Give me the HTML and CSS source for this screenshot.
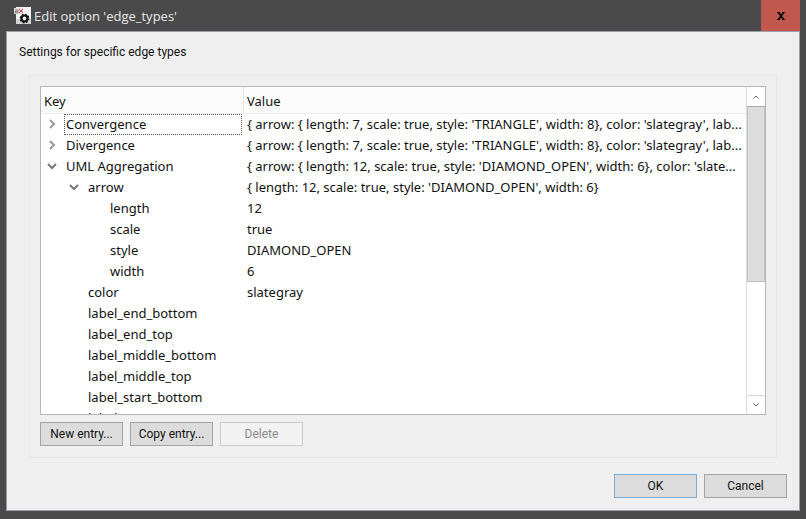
FILE: index.html
```html
<!DOCTYPE html>
<html lang="en">
    <head>
        <title>Edit option 'edge_types'</title>
        <meta charset="UTF-8">
        <meta name="viewport" content="width=device-width,initial-scale=1">
        <link rel="stylesheet" href="styles.css">
    </head>
    <body>
        <div class="window">
            <header class="titlebar">
                <svg class="app-icon" width="18" height="18" viewBox="0 0 18 18">
                    <rect x="2" y="0" width="15" height="17" fill="#f4f4f4"/>
                    <rect x="2" y="12" width="15" height="5" fill="#d4d4d4"/>
                    <rect x="0" y="1" width="9" height="6" fill="#e6dede"/>
                    <path d="M1 3h3v3h-3v-1.500h3" fill="none" stroke="#888"/>
                    <path d="M5 2l4 4M9 2l-4 4" stroke="#e0364a"/>
                    <circle cx="10.500" cy="11.500" r="3" fill="none" stroke="#111" stroke-width="2.200"/>
                    <circle cx="10.500" cy="11.500" r="4.300" fill="none" stroke="#111" stroke-width="1.200" stroke-dasharray="1.700 1.677"/>
                </svg>
                <h1>Edit option 'edge_types'</h1>
                <button class="close" aria-label="Close">
                    <svg width="8" height="8" viewBox="0 0 8 8"><path d="M0 .5h3M5 .5h3M0 7.500h3M5 7.500h3" stroke="#000"/><path d="M1.500 .5l5 7M6.500 .5l-5 7" stroke="#000" stroke-width="1.700"/></svg>
                </button>
            </header>

            <main class="content">
                <p class="description">Settings for specific edge types</p>

                <section class="group">
                    <div class="tree">
                        <div class="tree-view">
                            <table>
                                <colgroup><col class="key-col"><col></colgroup>
                                <thead>
                                    <tr><th>Key</th><th>Value</th></tr>
                                </thead>
                                <tbody>
                                    <tr>
                                        <td><div class="key"><svg class="arrow" viewBox="0 0 10 10"><path d="M3 1l4 4-4 4"/></svg><span class="name focused">Convergence</span></div></td>
                                        <td>{ arrow: { length: 7, scale: true, style: 'TRIANGLE', width: 8}, color: 'slategray', lab...</td>
                                    </tr>
                                    <tr>
                                        <td><div class="key"><svg class="arrow" viewBox="0 0 10 10"><path d="M3 1l4 4-4 4"/></svg><span class="name">Divergence</span></div></td>
                                        <td>{ arrow: { length: 7, scale: true, style: 'TRIANGLE', width: 8}, color: 'slategray', lab...</td>
                                    </tr>
                                    <tr>
                                        <td><div class="key"><svg class="arrow open" viewBox="0 0 10 10"><path d="M1 3l4 4 4-4"/></svg><span class="name">UML Aggregation</span></div></td>
                                        <td>{ arrow: { length: 12, scale: true, style: 'DIAMOND_OPEN', width: 6}, color: 'slate...</td>
                                    </tr>
                                    <tr>
                                        <td><div class="key level-1"><svg class="arrow open" viewBox="0 0 10 10"><path d="M1 3l4 4 4-4"/></svg><span class="name">arrow</span></div></td>
                                        <td>{ length: 12, scale: true, style: 'DIAMOND_OPEN', width: 6}</td>
                                    </tr>
                                    <tr><td><div class="key leaf level-2"><span class="name">length</span></div></td><td>12</td></tr>
                                    <tr><td><div class="key leaf level-2"><span class="name">scale</span></div></td><td>true</td></tr>
                                    <tr><td><div class="key leaf level-2"><span class="name">style</span></div></td><td>DIAMOND_OPEN</td></tr>
                                    <tr><td><div class="key leaf level-2"><span class="name">width</span></div></td><td>6</td></tr>
                                    <tr><td><div class="key leaf level-1"><span class="name">color</span></div></td><td>slategray</td></tr>
                                    <tr><td><div class="key leaf level-1"><span class="name">label_end_bottom</span></div></td><td></td></tr>
                                    <tr><td><div class="key leaf level-1"><span class="name">label_end_top</span></div></td><td></td></tr>
                                    <tr><td><div class="key leaf level-1"><span class="name">label_middle_bottom</span></div></td><td></td></tr>
                                    <tr><td><div class="key leaf level-1"><span class="name">label_middle_top</span></div></td><td></td></tr>
                                    <tr><td><div class="key leaf level-1"><span class="name">label_start_bottom</span></div></td><td></td></tr>
                                    <tr><td><div class="key leaf level-1"><span class="name">label_start_top</span></div></td><td></td></tr>
                                </tbody>
                            </table>
                        </div>
                        <div class="scrollbar">
                            <button class="scroll-button" aria-label="Scroll up"><svg width="6" height="4" viewBox="0 0 6 4"><path d="M.5 3.500l2.500-2.500 2.500 2.500"/></svg></button>
                            <div class="track"><div class="thumb"></div></div>
                            <button class="scroll-button down" aria-label="Scroll down"><svg width="6" height="4" viewBox="0 0 6 4"><path d="M.5 .5l2.500 2.500 2.500-2.500"/></svg></button>
                        </div>
                    </div>
                    <div class="buttons">
                        <button class="btn">New entry...</button>
                        <button class="btn">Copy entry...</button>
                        <button class="btn" disabled>Delete</button>
                    </div>
                </section>

                <footer class="buttons dialog-buttons">
                    <button class="btn default">OK</button>
                    <button class="btn">Cancel</button>
                </footer>
            </main>
        </div>
    </body>
</html>
```
FILE: styles.css
```css
* {
    box-sizing: border-box;
}

body {
    margin: 0;
    background: #4a4a4a;
    color: #111;
    font-family: Roboto, "Open Sans", sans-serif;
    font-size: 12px;
}

button {
    font: inherit;
    color: inherit;
    padding: 0;
}

.window {
    height: 100vh;
    padding: 0 6px 8px;
    display: flex;
    flex-direction: column;
}

.titlebar {
    height: 31px;
    padding-left: 8px;
    display: flex;
    align-items: center;
    flex: none;
    color: #e8e8e8;
}

.titlebar h1 {
    flex: 1;
    margin: 0 0 0 2px;
    font-family: "Open Sans", "Noto Sans", sans-serif;
    font-size: 13px;
    font-weight: normal;
}

.close {
    width: 39px;
    height: 31px;
    display: flex;
    align-items: center;
    justify-content: center;
    border: 0;
    background: #c1584e;
}

.content {
    flex: 1;
    min-height: 0;
    padding: 11px 12px 12px;
    display: flex;
    flex-direction: column;
    background: #efefef;
    border: 1px solid #9aa0a6;
}

.description {
    margin: 0 0 14px;
    line-height: 18px;
}

.group {
    flex: 1;
    min-height: 0;
    margin: 0 10px 16px;
    padding: 10px 10px 11px;
    display: flex;
    flex-direction: column;
    border: 1px solid #e4e6e8;
}

.tree {
    flex: 1;
    min-height: 0;
    display: flex;
    background: #fff;
    border: 1px solid #b4b6ba;
}

.tree-view {
    flex: 1;
    min-width: 0;
    overflow: hidden;
}

table {
    width: 100%;
    table-layout: fixed;
    border-collapse: separate;
    border-spacing: 0;
    font-family: "Noto Sans", "Open Sans", sans-serif;
    font-size: 13px;
    line-height: 21px;
    white-space: nowrap;
}

.key-col {
    width: 203px;
}

th {
    height: 27px;
    padding: 2px 3px 0;
    text-align: left;
    font-weight: normal;
    background: #fcfcfc;
    border-bottom: 1px solid #ececec;
}

th:first-child {
    border-right: 1px solid #e4e4e4;
}

td {
    height: 21px;
    padding: 0 3px;
    overflow: hidden;
}

td:first-child {
    padding: 0 2px 0 6px;
}

.key {
    display: flex;
    align-items: center;
}

.key.level-1 {
    padding-left: 22px;
}

.key.level-2 {
    padding-left: 44px;
}

.arrow {
    width: 10px;
    height: 10px;
    margin: 0 7px 2px 0;
    fill: none;
    stroke: #999;
    stroke-width: 2px;
}

.arrow.open {
    stroke: #777;
}

.leaf::before {
    content: "";
    width: 17px;
}

.name {
    flex: 1;
    height: 21px;
    padding-left: 2px;
}

.name.focused {
    outline: 1px dotted #555;
    outline-offset: -1px;
}

.scrollbar {
    width: 19px;
    display: flex;
    flex-direction: column;
    border-left: 1px solid #dcdcdc;
}

.scroll-button {
    height: 19px;
    display: flex;
    align-items: center;
    justify-content: center;
    border: 0;
    background: #fff;
}

.scroll-button.down {
    border-top: 1px solid #dcdcdc;
}

.scroll-button svg {
    fill: none;
    stroke: #666;
}

.track {
    flex: 1;
}

.thumb {
    height: 61%;
    background: #dcdcdc;
    border: 1px solid #c4c4c4;
    border-top-color: #a8a8a8;
}

.buttons {
    display: flex;
    gap: 7px;
    margin-top: 7px;
}

.dialog-buttons {
    justify-content: flex-end;
    margin-top: 0;
}

.btn {
    width: 83px;
    height: 24px;
    background: #dcdcdc;
    border: 1px solid #a4a4a4;
}

.btn.default {
    border-color: #7eabd0;
}

.btn:disabled {
    color: #8a8a8a;
    background: #f2f2f2;
    border-color: #cacaca;
}
```
